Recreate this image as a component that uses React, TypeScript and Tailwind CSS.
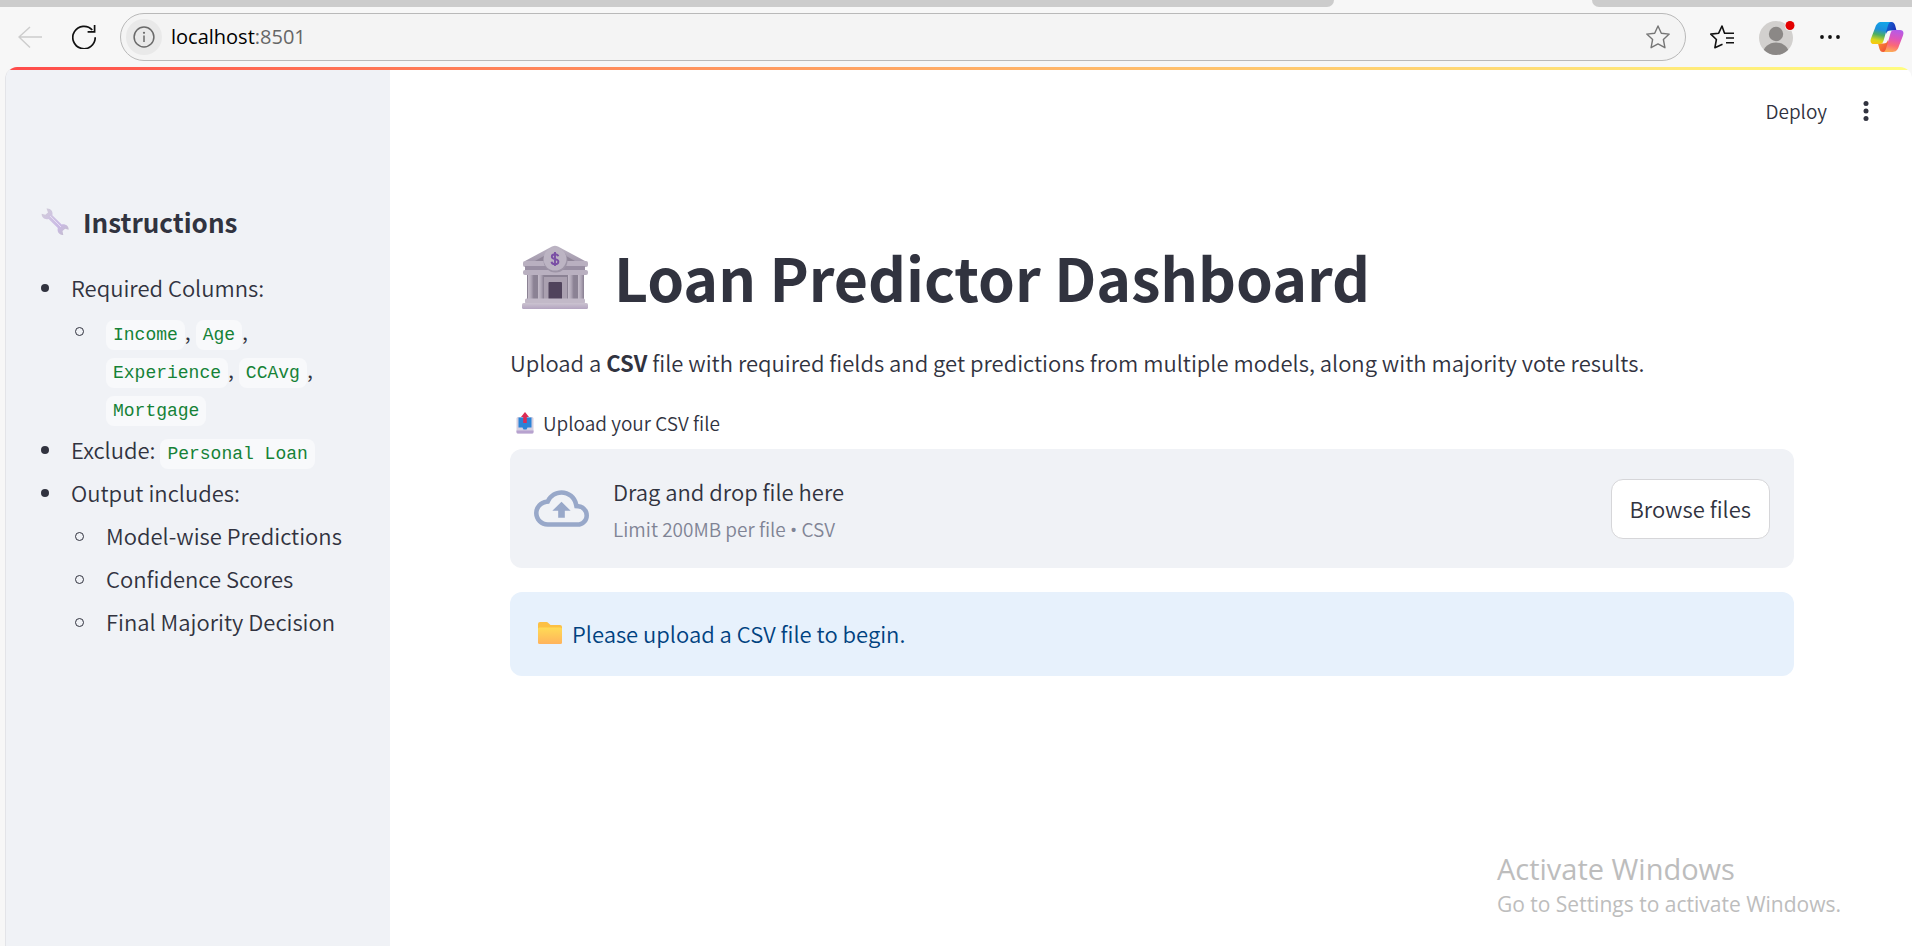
import { useRef } from "react";
import type { ReactNode } from "react";

function BackIcon() {
  return (
    <svg viewBox="0 0 24 24" className="size-6" fill="none" stroke="#cdcdcd" strokeWidth="1.5" aria-hidden="true">
      <path d="M24 12H1M12 2 1 12l11 10.500" />
    </svg>
  );
}

function ReloadIcon() {
  return (
    <svg viewBox="0 0 24 24" className="size-6" fill="none" stroke="#111" strokeWidth="1.700" aria-hidden="true">
      <path d="M23.200 12.300A11.200 11.200 0 1 1 20.300 5" />
      <path d="M22.600 0v6.800h-7" />
    </svg>
  );
}

function InfoIcon() {
  return (
    <svg viewBox="0 0 22 22" className="size-[22px]" fill="none" stroke="#6a6a6a" strokeWidth="1.500" aria-hidden="true">
      <circle cx="11" cy="11" r="9.900" />
      <path d="M11 9.500V16" />
      <circle cx="11" cy="6.800" r="1.100" fill="#6a6a6a" stroke="none" />
    </svg>
  );
}

function StarIcon() {
  return (
    <svg viewBox="0 0 24 24" className="size-6" fill="none" stroke="#767676" strokeWidth="1.400" strokeLinejoin="round" aria-hidden="true">
      <path d="M12 1l3.300 7.200 7.900.9-5.800 5.400 1.500 8.200L12 18.900l-6.900 3.800 1.500-8.200L.8 9.100l7.900-.9z" />
    </svg>
  );
}

function FavoritesIcon() {
  return (
    <svg viewBox="0 0 24 24" className="size-6" fill="none" stroke="#111" strokeWidth="1.600" strokeLinejoin="round" aria-hidden="true">
      <path d="M14.500 8.200 12 1 8.700 8.200.8 9.100l5.600 5.400-1.500 8.200 7.600-3.400" />
      <path d="M14 8.200h10M16 13h8M16 17.800h8" />
    </svg>
  );
}

function Avatar() {
  return (
    <svg viewBox="0 0 36 36" className="size-9" aria-hidden="true">
      <defs>
        <clipPath id="avatar-clip">
          <circle cx="17" cy="19" r="17" />
        </clipPath>
      </defs>
      <g clipPath="url(#avatar-clip)">
        <rect width="36" height="36" fill="#d2d0ce" />
        <circle cx="17" cy="15" r="7.200" fill="#8b8886" />
        <ellipse cx="17" cy="35" rx="13" ry="11.500" fill="#8b8886" />
      </g>
      <circle cx="31" cy="6.500" r="5.300" fill="#f7f7f7" />
      <circle cx="31" cy="6.500" r="4.500" fill="#e30000" />
    </svg>
  );
}

function MoreIcon() {
  return (
    <svg viewBox="0 0 20 4" className="h-1 w-5" fill="#111" aria-hidden="true">
      <circle cx="2" cy="2" r="1.900" />
      <circle cx="10" cy="2" r="1.900" />
      <circle cx="18" cy="2" r="1.900" />
    </svg>
  );
}

function CopilotIcon() {
  return (
    <svg viewBox="0 0 34 32" className="h-8 w-[34px]" aria-hidden="true">
      <defs>
        <linearGradient id="cp-a" x1="0.600" y1="0" x2="0.400" y2="1">
          <stop offset="0" stopColor="#12a5e8" />
          <stop offset="0.350" stopColor="#1d90dc" />
          <stop offset="0.600" stopColor="#4fae60" />
          <stop offset="0.850" stopColor="#d8d61c" />
          <stop offset="1" stopColor="#f7c90f" />
        </linearGradient>
        <linearGradient id="cp-b" x1="0.600" y1="0" x2="0.400" y2="1">
          <stop offset="0" stopColor="#b45be8" />
          <stop offset="0.400" stopColor="#e055b8" />
          <stop offset="0.700" stopColor="#fb6a76" />
          <stop offset="1" stopColor="#fdae55" />
        </linearGradient>
        <linearGradient id="cp-c" x1="0" y1="0" x2="1" y2="0.500">
          <stop offset="0" stopColor="#1272dc" />
          <stop offset="1" stopColor="#1b2fb4" />
        </linearGradient>
        <linearGradient id="cp-d" x1="0" y1="0" x2="1" y2="1">
          <stop offset="0" stopColor="#fb9a2a" />
          <stop offset="1" stopColor="#ee3f3d" />
        </linearGradient>
      </defs>
      <path d="M15 1h6.500c2 0 3 1.300 3.600 3.300L26.500 9.500h-6c-2.500 0-3.700 1-4.500 3.500z" fill="url(#cp-c)" />
      <path d="M19 31h-6c-2 0-3-1.300-3.600-3.300L8 22.500h5.500c2.500 0 3.700-1 4.500-3.500z" fill="url(#cp-d)" />
      <path d="M21 1H11.500C8 1 6.500 3 5.300 6.200L1 17.500C-.2 21 1 23 4 23h5.500c2.300 0 3.300-1 4-3.300L17.800 5C18.500 2.500 19.500 1 21 1z" fill="url(#cp-a)" />
      <path d="M13 31h9.500c3.500 0 5-2 6.200-5.200L33 14.500c1.200-3.500 0-5.500-3-5.500h-5.500c-2.300 0-3.300 1-4 3.300L16.200 27c-.7 2.500-1.700 4-3.200 4z" fill="url(#cp-b)" />
    </svg>
  );
}

function KebabIcon() {
  return (
    <svg viewBox="0 0 6 20" className="h-5 w-1.5" fill="#31333f" aria-hidden="true">
      <circle cx="3" cy="2.500" r="2.500" />
      <circle cx="3" cy="10" r="2.500" />
      <circle cx="3" cy="17.500" r="2.500" />
    </svg>
  );
}

function WrenchIcon() {
  return (
    <svg viewBox="0 0 28 28" className="size-7 shrink-0" aria-hidden="true">
      <defs>
        <linearGradient id="wrench" x1="0" y1="0" x2="1" y2="1">
          <stop offset="0" stopColor="#d0ccd6" />
          <stop offset="0.350" stopColor="#cfc3e2" />
          <stop offset="0.650" stopColor="#c9b9e4" />
          <stop offset="1" stopColor="#c4bfca" />
        </linearGradient>
      </defs>
      <path
        d="M5.500.6c4-.6 6.900 2.900 5.900 6.600l9.300 9.300c3.400-.9 7.300 1.500 6.900 5.200l-3.500-1-2.600 2.300.8 3.900c-3.900.6-6.500-3-5.500-6.800L7.600 10.900C3.800 12 .3 9.400.7 5.800l3.600 1 2.700-2.400z"
        fill="url(#wrench)"
      />
      <path d="M9 8l11 11" stroke="#e6ddf3" strokeWidth="1" />
    </svg>
  );
}

function BankIcon() {
  return (
    <svg viewBox="0 0 66 64" className="h-16 w-[66px] shrink-0" aria-hidden="true">
      <defs>
        <linearGradient id="bank-roof" x1="0" y1="0" x2="0" y2="1">
          <stop offset="0" stopColor="#bdb5c4" />
          <stop offset="1" stopColor="#9c92a6" />
        </linearGradient>
        <linearGradient id="bank-col" x1="0" y1="0" x2="1" y2="0">
          <stop offset="0" stopColor="#c5bdca" />
          <stop offset="0.500" stopColor="#b1a8b8" />
          <stop offset="1" stopColor="#877d90" />
        </linearGradient>
        <linearGradient id="bank-base" x1="0" y1="0" x2="0" y2="1">
          <stop offset="0" stopColor="#cbc3d0" />
          <stop offset="1" stopColor="#b3a4c0" />
        </linearGradient>
      </defs>
      <rect x="5" y="28" width="56" height="28" fill="#8b8294" />
      <path d="M30 1.500q3-1.500 6 0L63 16v5H3v-5z" fill="url(#bank-roof)" />
      <path d="M13 16 29 7v9zM53 16 37 7v9z" fill="#8f8598" />
      <rect x="1" y="16" width="65" height="6" rx="2" fill="#b9b0c0" />
      <rect x="3" y="21" width="60" height="5" fill="#988ea2" />
      <rect x="1" y="25" width="65" height="5" rx="2" fill="#b9b0c0" />
      <rect x="6" y="30" width="6" height="24" fill="url(#bank-col)" />
      <rect x="16" y="30" width="6" height="24" fill="url(#bank-col)" />
      <rect x="22" y="32" width="23" height="23" fill="#aaa0b0" />
      <rect x="46" y="30" width="6" height="24" fill="url(#bank-col)" />
      <rect x="56" y="30" width="6" height="24" fill="url(#bank-col)" />
      <rect x="26.500" y="37" width="13.500" height="18" rx="1" fill="#50435c" />
      <rect x="3" y="53.500" width="60" height="5" rx="1.500" fill="#c2b9c8" />
      <rect x="0" y="58" width="66" height="6" rx="1.500" fill="url(#bank-base)" />
      <circle cx="33.500" cy="15.500" r="12" fill="#9d94a6" />
      <circle cx="33" cy="14" r="11.500" fill="#bcb4c3" />
      <path
        d="M36.300 11.200c-.5-1.500-1.700-2-3.300-2-2 0-3.200 1-3.200 2.500 0 3.300 6.600 1.600 6.600 5 0 1.600-1.400 2.500-3.400 2.500-1.900 0-3.200-.8-3.500-2.400M33 7v14"
        fill="none"
        stroke="#7a4fa5"
        strokeWidth="1.900"
      />
    </svg>
  );
}

function OutboxIcon() {
  return (
    <svg viewBox="0 0 18 22" className="h-[22px] w-[18px] shrink-0" aria-hidden="true">
      <path d="M2 5h14q1.500 0 1.500 1.500V20q0 1.500-1.500 1.500H2Q.5 21.500.5 20V6.500Q.5 5 2 5z" fill="#d5cfe0" />
      <path d="M.5 18.500h17V20q0 1.500-1.500 1.500H2Q.5 21.500.5 20z" fill="#b7a2cf" />
      <path d="M2.500 5.500h13v10h-4l-1 2h-3l-1-2h-4z" fill="#2a83d8" />
      <path d="M9 0l4 5h-2.200v6H7.200V5H5z" fill="#dc2c55" />
    </svg>
  );
}

function FolderIcon() {
  return (
    <svg viewBox="0 0 24 22" className="h-[22px] w-6 shrink-0" aria-hidden="true">
      <defs>
        <linearGradient id="folder" x1="0" y1="0" x2="0" y2="1">
          <stop offset="0" stopColor="#ffdb55" />
          <stop offset="1" stopColor="#ffb35c" />
        </linearGradient>
      </defs>
      <path d="M0 2q0-2 2-2h6.500q1 0 1.800.9L12.500 3H22q2 0 2 2v8H0z" fill="#fcc044" />
      <path d="M0 7q0-1.500 1.500-1.500h21Q24 5.500 24 7v13.500q0 1.500-1.500 1.500h-21Q0 22 0 20.500z" fill="url(#folder)" />
    </svg>
  );
}

function CloudUploadIcon() {
  return (
    <svg viewBox="0 0 24 24" className="size-[55px] shrink-0" fill="#98a8c9" aria-hidden="true">
      <path d="M19.350 10.040A7.490 7.490 0 0 0 12 4C9.110 4 6.600 5.640 5.350 8.040A5.994 5.994 0 0 0 0 14c0 3.310 2.690 6 6 6h13c2.760 0 5-2.240 5-5 0-2.640-2.050-4.780-4.650-4.960zM19 18H6c-2.210 0-4-1.790-4-4 0-2.050 1.530-3.760 3.560-3.970l1.070-.11.5-.95A5.469 5.469 0 0 1 12 6c2.620 0 4.880 1.860 5.390 4.430l.3 1.500 1.530.11A2.980 2.980 0 0 1 22 15c0 1.650-1.350 3-3 3zM8 13h2.550v3h2.900v-3H16l-4-4z" />
    </svg>
  );
}

function BrowserBar() {
  return (
    <header className="bg-[#f7f7f7]">
      <div className="flex h-[7px]">
        <div className="flex-1 rounded-br-lg bg-[#cccccc]" />
        <div className="w-[258px]" />
        <div className="w-[320px] rounded-bl-lg bg-[#cccccc]" />
      </div>
      <div className="flex h-[60px] items-center pr-2 pl-[18px]">
        <button type="button" aria-label="Back" disabled>
          <BackIcon />
        </button>
        <button type="button" aria-label="Reload" className="ml-[30px]">
          <ReloadIcon />
        </button>
        <div className="ml-6 flex h-12 flex-1 items-center rounded-full border border-[#b9b9b9] bg-[#f4f4f4] pr-[15px] pl-[5px] font-['Open_Sans',sans-serif] text-[20px] font-normal">
          <button type="button" aria-label="Site information" className="grid size-9 place-items-center rounded-full bg-[#e9e9e9]">
            <InfoIcon />
          </button>
          <p className="ml-[9px] flex-1 text-black">
            localhost<span className="text-[#666666]">:8501</span>
          </p>
          <button type="button" aria-label="Add to favorites">
            <StarIcon />
          </button>
        </div>
        <div className="ml-6 flex items-center">
          <button type="button" aria-label="Favorites">
            <FavoritesIcon />
          </button>
          <button type="button" aria-label="Profile" className="ml-[25px]">
            <Avatar />
          </button>
          <button type="button" aria-label="More" className="ml-[25px] py-2">
            <MoreIcon />
          </button>
          <button type="button" aria-label="Copilot" className="ml-[30px]">
            <CopilotIcon />
          </button>
        </div>
      </div>
    </header>
  );
}

function Code({ children }: { children: ReactNode }) {
  return (
    <code className="rounded-lg bg-[#f8f9fb] px-[7px] py-[5px] font-['Liberation_Mono',monospace] text-[18px] leading-[20px] font-normal text-[#158237]">
      {children}
    </code>
  );
}

function Bullet({ children }: { children: ReactNode }) {
  return (
    <li className="flex">
      <span className="mt-4 mr-[22px] size-2 shrink-0 rounded-full bg-[#31333f]" />
      <div className="min-w-0 flex-1">{children}</div>
    </li>
  );
}

function SubBullet({ children }: { children: ReactNode }) {
  return (
    <li className="flex">
      <span className="mt-4 mr-[22px] size-[9px] shrink-0 rounded-full border border-[#31333f]" />
      <div className="min-w-0 flex-1">{children}</div>
    </li>
  );
}

function Sidebar() {
  return (
    <aside className="w-[384px] shrink-0 bg-[#f0f2f6] pt-[130px] pr-9 pl-[35px]">
      <h2 className="flex items-center gap-[14px] text-[26px] leading-[44px] font-semibold">
        <WrenchIcon />
        Instructions
      </h2>
      <ul className="mt-6 flex flex-col gap-[5px] text-[22px] leading-[38px]">
        <Bullet>
          Required Columns:
          <ul className="mt-[5px] pl-1">
            <SubBullet>
              <Code>Income</Code>, <Code>Age</Code>, <Code>Experience</Code>, <Code>CCAvg</Code>, <Code>Mortgage</Code>
            </SubBullet>
          </ul>
        </Bullet>
        <Bullet>
          Exclude: <Code>Personal Loan</Code>
        </Bullet>
        <Bullet>
          Output includes:
          <ul className="mt-[5px] flex flex-col gap-[5px] pl-1">
            <SubBullet>Model-wise Predictions</SubBullet>
            <SubBullet>Confidence Scores</SubBullet>
            <SubBullet>Final Majority Decision</SubBullet>
          </ul>
        </Bullet>
      </ul>
    </aside>
  );
}

function Uploader() {
  const input = useRef<HTMLInputElement>(null);
  return (
    <section className="mt-[25px]">
      <label htmlFor="csv" className="flex items-center gap-[9px] pl-1.5 text-[19px] leading-[34px]">
        <OutboxIcon />
        Upload your CSV file
      </label>
      <input ref={input} id="csv" type="file" accept=".csv" className="hidden" />
      <div className="mt-[9px] flex items-center rounded-xl bg-[#f0f2f6] px-6 py-[19px]">
        <CloudUploadIcon />
        <div className="ml-6 flex-1 pt-1">
          <p className="text-[22px] leading-[38px]">Drag and drop file here</p>
          <p className="text-[19px] leading-[38px] text-[#808495]">
            Limit 200MB per file <span className="font-['Open_Sans',sans-serif] font-normal">•</span> CSV
          </p>
        </div>
        <button
          type="button"
          onClick={() => input.current?.click()}
          className="h-[60px] rounded-xl border border-[#d6d6d9] bg-white px-[18px] text-[22px]"
        >
          Browse files
        </button>
      </div>
    </section>
  );
}

function Main() {
  return (
    <main className="flex flex-1 flex-col bg-white">
      <div className="flex items-center justify-end gap-9 pt-6 pr-[43px]">
        <button type="button" className="text-[19px] leading-[34px]">
          Deploy
        </button>
        <button type="button" aria-label="Main menu">
          <KebabIcon />
        </button>
      </div>
      <div className="pt-[109px] pr-[118px] pl-[120px]">
        <h1 className="flex items-center gap-[26px] pl-3 text-[59px] leading-[80px] font-bold">
          <BankIcon />
          Loan Predictor Dashboard
        </h1>
        <p className="mt-[26px] text-[22px] leading-[38px]">
          Upload a <strong className="font-semibold">CSV</strong> file with required fields and get predictions from
          multiple models, along with majority vote results.
        </p>
        <Uploader />
        <div role="status" className="mt-6 flex items-center gap-[10px] rounded-xl bg-[#e7f1fc] px-7 pt-[22px] pb-6 text-[22px] leading-[38px] text-[#004280]">
          <FolderIcon />
          Please upload a CSV file to begin.
        </div>
      </div>
      <div className="mt-auto flex flex-col self-end pr-[71px] pb-[26px] font-['Open_Sans',sans-serif] font-normal text-[#bdbdbd]">
        <p className="text-[29px] leading-[38px]">Activate Windows</p>
        <p className="text-[21px] leading-[32px]">Go to Settings to activate Windows.</p>
      </div>
    </main>
  );
}

export default function App() {
  return (
    <div className="flex min-h-screen flex-col bg-[#f7f7f7] font-['Noto_Sans_CJK_SC',sans-serif] font-[350] text-[#31333f]">
      <BrowserBar />
      <div className="ml-[5px] flex flex-1 flex-col overflow-hidden rounded-t-xl border-l border-[#e3e4e8]">
        <div className="h-[3px] bg-linear-to-r from-[#ff4b4b] to-[#fffd80]" />
        <div className="flex flex-1">
          <Sidebar />
          <Main />
        </div>
      </div>
    </div>
  );
}
